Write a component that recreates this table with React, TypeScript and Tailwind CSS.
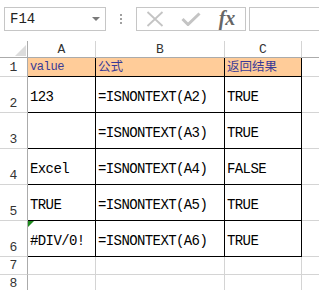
import React from "react";

const mono = { fontFamily: '"Liberation Mono", "Noto Sans CJK SC", monospace' };

const rows = [
  { n: "2", a: "123", b: "=ISNONTEXT(A2)", c: "TRUE" },
  { n: "3", a: "", b: "=ISNONTEXT(A3)", c: "TRUE" },
  { n: "4", a: "Excel", b: "=ISNONTEXT(A4)", c: "FALSE" },
  { n: "5", a: "TRUE", b: "=ISNONTEXT(A5)", c: "TRUE" },
  { n: "6", a: "#DIV/0!", b: "=ISNONTEXT(A6)", c: "TRUE", tri: true },
];

function RowNum({ n, h }: { n: string; h: string }) {
  return (
    <div
      className={`${h} flex items-end justify-center border-r border-b border-r-[#ababab] border-b-[#d4d4d4] text-[13px] leading-[13px] text-[#333] pb-[2px]`}
    >
      {n}
    </div>
  );
}

function DataCell({ t, tri }: { t: string; tri?: boolean }) {
  return (
    <div className="relative h-[36px] flex items-end pl-[2px] pb-[7px] border-b border-b-black border-r border-r-black text-[14px] tracking-[-0.6px] leading-[15px] text-black whitespace-nowrap">
      {tri && (
        <div className="absolute left-0 top-0 w-0 h-0 border-t-[6px] border-t-[#1e8a1e] border-r-[6px] border-r-transparent" />
      )}
      {t}
    </div>
  );
}

export default function App() {
  return (
    <div className="w-[319px] h-[290px] overflow-hidden bg-white" style={mono}>
      {/* toolbar */}
      <div className="h-[41px] flex items-start pt-[7px] pl-[4px]">
        <div className="w-[102px] h-[24px] shrink-0 border border-[#c6c6c6] flex items-center justify-between pl-[5px] pr-[5px]">
          <span className="text-[14px] leading-none text-[#222]">F14</span>
          <div className="w-0 h-0 border-l-[4px] border-r-[4px] border-t-[4px] border-l-transparent border-r-transparent border-t-[#7a7a7a]" />
        </div>
        <div className="w-[30px] h-[24px] shrink-0 flex flex-col items-center justify-center gap-[2px]">
          <div className="w-[2px] h-[2px] bg-[#a0a0a0]" />
          <div className="w-[2px] h-[2px] bg-[#a0a0a0]" />
          <div className="w-[2px] h-[2px] bg-[#a0a0a0]" />
        </div>
        <div className="w-[110px] h-[24px] shrink-0 border border-[#c6c6c6] flex">
          <div className="flex-1 flex items-center justify-center">
            <svg width="18" height="16" viewBox="0 0 18 16">
              <path d="M1.5 1 L16.5 15 M16.5 1 L1.5 15" stroke="#c4c4c4" strokeWidth="1.8" fill="none" />
            </svg>
          </div>
          <div className="flex-1 flex items-center justify-center">
            <svg width="20" height="14" viewBox="0 0 20 14">
              <path d="M1.5 7 L7 12.5 L18.5 1.5" stroke="#c4c4c4" strokeWidth="3" fill="none" />
            </svg>
          </div>
          <div className="flex-1 flex items-center justify-center">
            <span
              className="italic font-bold text-[20px] leading-none text-[#666] pb-[3px]"
              style={{ fontFamily: '"Liberation Serif", serif' }}
            >
              fx
            </span>
          </div>
        </div>
        <div className="ml-[3px] w-[90px] h-[24px] shrink-0 border border-[#c6c6c6]" />
      </div>

      {/* sheet */}
      <div className="grid grid-cols-[28px_68px_129px_77px_60px]">
        {/* header row */}
        <div className="relative h-[17px] border-r border-b border-r-[#ababab] border-b-[#ababab]">
          <div className="absolute left-[15px] top-[4px] w-0 h-0 border-b-[11px] border-b-[#dcdcdc] border-l-[11px] border-l-transparent" />
        </div>
        {["A", "B", "C", ""].map((c, i) => (
          <div
            key={i}
            className="h-[17px] flex items-center justify-center border-r border-b border-r-[#d4d4d4] border-b-[#ababab] text-[13px] leading-none text-[#333]"
          >
            {c}
          </div>
        ))}

        {/* row 1 */}
        <RowNum n="1" h="h-[19px]" />
        <div className="h-[19px] bg-[#ffcc99] border-r border-b border-black flex items-end pl-[2px] pb-[3px] text-[12px] tracking-[-0.4px] leading-none text-[#3a3a96]">
          value
        </div>
        <div className="h-[19px] bg-[#ffcc99] border-r border-b border-black flex items-end pl-[2px] pb-[2px] text-[12.5px] leading-none text-[#3a3a96]">
          公式
        </div>
        <div className="h-[19px] bg-[#ffcc99] border-r border-b border-black flex items-end pl-[2px] pb-[2px] text-[12.5px] leading-none text-[#3a3a96]">
          返回结果
        </div>
        <div className="h-[19px] border-b border-b-[#d4d4d4]" />

        {rows.map((r) => (
          <React.Fragment key={r.n}>
            <RowNum n={r.n} h="h-[36px]" />
            <DataCell t={r.a} tri={r.tri} />
            <DataCell t={r.b} />
            <DataCell t={r.c} />
            <div className="h-[36px] border-b border-b-[#d4d4d4]" />
          </React.Fragment>
        ))}

        {["7", "8"].map((n) => (
          <React.Fragment key={n}>
            <RowNum n={n} h="h-[18px]" />
            <div className="h-[18px] border-r border-b border-[#d4d4d4]" />
            <div className="h-[18px] border-r border-b border-[#d4d4d4]" />
            <div className="h-[18px] border-r border-b border-[#d4d4d4]" />
            <div className="h-[18px] border-b border-[#d4d4d4]" />
          </React.Fragment>
        ))}
      </div>
    </div>
  );
}
